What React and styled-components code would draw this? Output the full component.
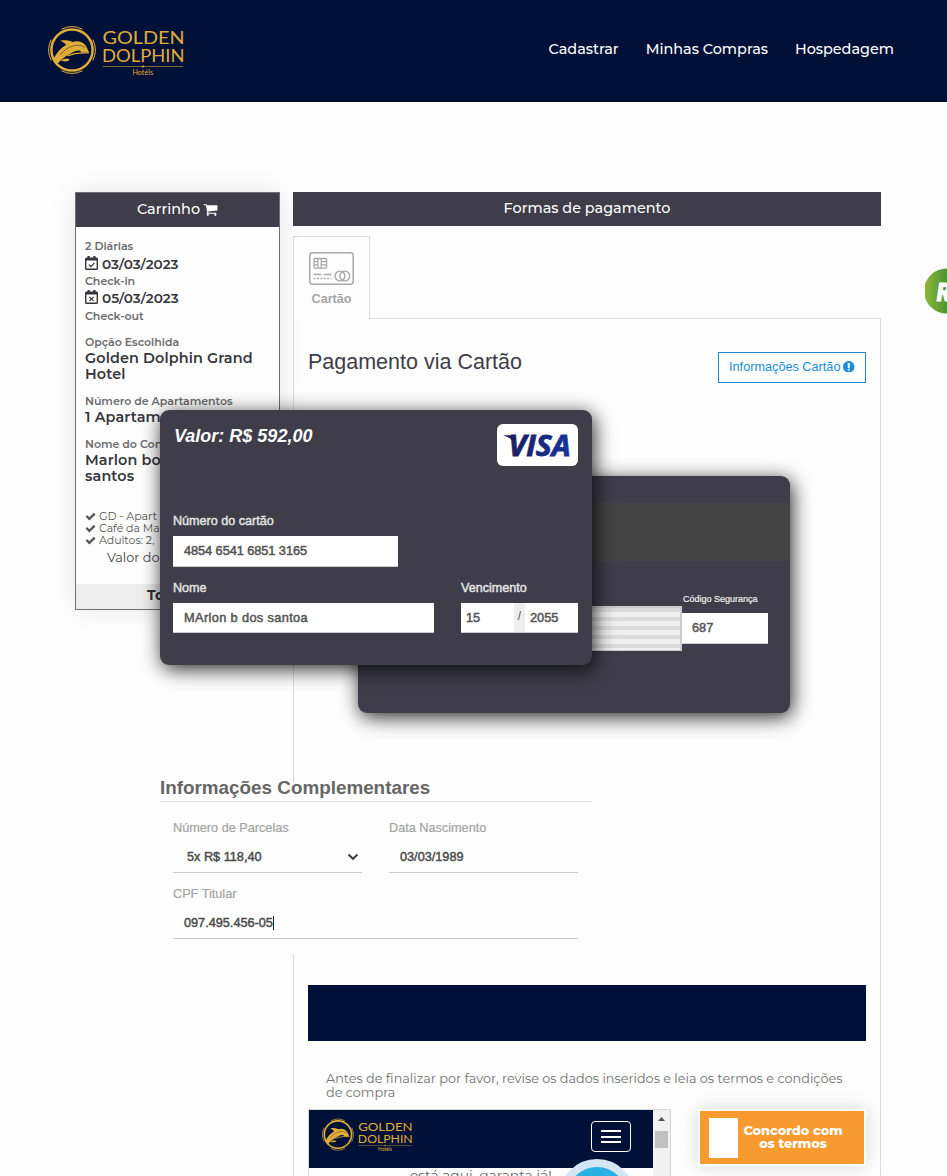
import React from "react";
import styled, { createGlobalStyle } from "styled-components";

const brand = '"Montserrat", "Inter", sans-serif';
const plain = '"Liberation Sans", Arial, sans-serif';
const navy = "#001037";
const slate = "#3e3d49";

const GlobalStyle = createGlobalStyle`
  * { box-sizing: border-box; }
  html, body { margin: 0; background: #fefefe; }
  body { overflow: hidden; }
`;

const Page = styled.div`
  height: 1176px;
  overflow: hidden;
  font-family: ${brand};
  color: #333;
`;

const Header = styled.header`
  height: 102px;
  background: ${navy};
  border-bottom: 1px solid #000a26;
  display: flex;
  justify-content: space-between;
  align-items: flex-start;
  padding: 25px 53px 0 48px;
`;

const Nav = styled.nav`
  display: flex;
  gap: 27px;
  padding-top: 14px;
`;

const NavLink = styled.a`
  color: #fff;
  font-size: 14.4px;
  font-weight: 500;
  line-height: 20px;
  white-space: nowrap;
`;

const Content = styled.main`
  display: flex;
  align-items: flex-start;
  gap: 13px;
  padding: 90px 66px 0 75px;
`;

const Cart = styled.aside`
  width: 205px;
  height: 418px;
  flex: none;
  display: flex;
  flex-direction: column;
  border: 1px solid #6f6f74;
  background: #fefefe;
  box-shadow: 0 0 24px rgba(0, 0, 0, 0.1);
`;

const CartHead = styled.div`
  height: 34px;
  background: ${slate};
  color: #fff;
  font-size: 14.4px;
  font-weight: 500;
  display: flex;
  align-items: center;
  justify-content: center;
  gap: 3px;
  padding-bottom: 2px;
`;

const CartBody = styled.div`
  flex: 1;
  padding: 11px 9px 0;
  display: flex;
  flex-direction: column;
`;

const CartGroup = styled.div`
  margin-bottom: ${(p) => p.$after || 11}px;
`;

const Caption = styled.div`
  font-size: 11px;
  font-weight: 600;
  color: #6c6c6f;
  line-height: ${(p) => p.$line || 16}px;
  letter-spacing: -0.03px;
  white-space: nowrap;
`;

const Strong = styled.div`
  font-size: 14.4px;
  font-weight: 600;
  color: #35353b;
  line-height: 16px;
  letter-spacing: 0.12px;
  white-space: nowrap;
`;

const DateLine = styled(Strong)`
  font-size: 13.6px;
  line-height: 20px;
  letter-spacing: 0;
  display: flex;
  align-items: center;
  gap: 4px;

  svg {
    margin-bottom: 3px;
  }
`;

const Perk = styled.div`
  display: flex;
  align-items: center;
  gap: 3px;
  font-size: 11px;
  line-height: 12px;
  color: #555;
  white-space: nowrap;
  letter-spacing: -0.05px;
`;

const CartValue = styled.div`
  font-size: 12.8px;
  line-height: 16px;
  margin-top: 4px;
  padding-left: 22px;
  color: #444;
`;

const CartTotal = styled.div`
  height: 25px;
  background: #ededed;
  padding-left: 71px;
  font-size: 14px;
  font-weight: 700;
  line-height: 23px;
`;

const Payment = styled.section`
  width: 588px;
  flex: none;
`;

const PaymentTitle = styled.div`
  height: 34px;
  background: ${slate};
  color: #fff;
  font-size: 14.4px;
  font-weight: 500;
  line-height: 32px;
  text-align: center;
`;

const Tab = styled.div`
  width: 77px;
  height: 83px;
  margin-top: 10px;
  margin-bottom: -1px;
  position: relative;
  z-index: 1;
  border: 1px solid #dcdcdc;
  border-bottom: 0;
  background: #fefefe;
  display: flex;
  flex-direction: column;
  align-items: center;
  padding-top: 15px;
  gap: 5px;
`;

const TabLabel = styled.span`
  font: bold 12.6px/18px ${plain};
  color: #a5a5a5;
`;

const Pane = styled.div`
  position: relative;
  z-index: 0;
  height: 870px;
  border: 1px solid #dcdcdc;
  padding: 29px 14px 0;
`;

const PaneHead = styled.div`
  display: flex;
  justify-content: space-between;
  align-items: flex-start;
`;

const PaneTitle = styled.h2`
  margin: 0;
  font: 400 21.5px/28px ${plain};
  color: #3e3d49;
`;

const InfoButton = styled.button`
  width: 148px;
  height: 31px;
  margin-top: 4px;
  padding: 0 0 2px;
  border: 1px solid #1b8ddb;
  background: #fff;
  color: #1b8ddb;
  font: 400 12.7px/16px ${plain};
  display: flex;
  align-items: center;
  justify-content: center;
  gap: 3px;
`;

const Overlay = styled.div`
  position: absolute;
  left: -134px;
  top: 91px;
  width: 630px;
  font-family: ${plain};
`;

const CardStage = styled.div`
  position: relative;
  height: 372px;
`;

const CardFront = styled.div`
  position: relative;
  width: 432px;
  height: 255px;
  border-radius: 9px;
  background: ${slate};
  box-shadow: 2px 4px 20px rgba(0, 0, 0, 0.85);
  padding: 14px 14px 0 13px;
`;

const CardBack = styled.div`
  position: absolute;
  left: 198px;
  top: 66px;
  width: 432px;
  height: 237px;
  border-radius: 9px;
  background: ${slate};
  box-shadow: 2px 4px 20px rgba(0, 0, 0, 0.85);
  padding-top: 27px;
`;

const Stripe = styled.div`
  height: 58px;
  background: #444;
`;

const SignatureRow = styled.div`
  display: flex;
  align-items: flex-end;
  padding-top: 31px;
  padding-left: 20px;
`;

const Signature = styled.div`
  width: 304px;
  height: 45px;
  margin-bottom: -7px;
  border: 2px solid #ccc;
  border-bottom-width: 1px;
  background: repeating-linear-gradient(#dcdcdc 0 4px, #f0f0f0 4px 9px);
`;

const CardTop = styled.div`
  display: flex;
  justify-content: space-between;
  align-items: flex-start;
`;

const Amount = styled.div`
  font: italic bold 18px/24px ${plain};
  color: #fff;
  padding-left: 1px;
`;

const FlagBox = styled.div`
  width: 81px;
  height: 42px;
  border-radius: 6px;
  background: #fff;
`;

const CardFields = styled.div`
  margin-top: 46px;
`;

const FieldRow = styled.div`
  display: flex;
  justify-content: space-between;
  margin-top: ${(p) => p.$top || 0}px;
`;

const Field = styled.label`
  display: flex;
  flex-direction: column;
  width: ${(p) => p.$w}px;
`;

const FieldLabel = styled.span`
  font: 400 12.6px/18px ${plain};
  -webkit-text-stroke: 0.45px;
  color: #e3e3e3;
  margin-bottom: 6px;
  white-space: nowrap;
`;

const SmallLabel = styled.span`
  font: 400 9px/14px ${plain};
  -webkit-text-stroke: 0.2px;
  color: #eee;
  margin-bottom: 7px;
  padding-left: 1px;
  white-space: nowrap;
`;

const Input = styled.div`
  height: ${(p) => p.$h || 31}px;
  width: ${(p) => (p.$w ? p.$w + "px" : "auto")};
  background: #fff;
  border-bottom: 1px solid #ccc;
  color: #555;
  font: 400 12.8px/29px ${plain};
  -webkit-text-stroke: 0.5px;
  padding-left: ${(p) => p.$pad ?? 11}px;
  letter-spacing: ${(p) => p.$track || 0}px;
  white-space: nowrap;
`;

const DateGroup = styled.div`
  display: flex;
`;

const Slash = styled.div`
  width: 11px;
  height: 30px;
  background: #eee;
  border-bottom: 1px solid #ccc;
  color: #555;
  font: 400 12px/27px ${plain};
  text-align: center;
`;

const Extra = styled.section`
  width: 432px;
  height: 172px;
  background: #fefefe;
`;

const ExtraTitle = styled.h3`
  margin: 0;
  position: relative;
  top: -8px;
  height: 28px;
  border-bottom: 1px solid #e5e5e5;
  font: bold 18.85px/27px ${plain};
  color: #666;
`;

const ExtraGrid = styled.div`
  display: grid;
  grid-template-columns: 189px 189px;
  column-gap: 27px;
  padding: 9px 14px 0 13px;
`;

const ExtraField = styled.label`
  height: 66px;
  display: flex;
  flex-direction: column;
  grid-column: ${(p) => (p.$wide ? "1 / -1" : "auto")};
`;

const ExtraLabel = styled.span`
  font: 400 12.7px/18px ${plain};
  -webkit-text-stroke: 0.2px;
  color: #a3a3a3;
`;

const ExtraValue = styled.div`
  height: 36px;
  border-bottom: 1px solid #c9c9c9;
  padding: 5px 3px 0 ${(p) => p.$pad || 11}px;
  display: flex;
  align-items: center;
  font: 400 12.7px/16px ${plain};
  -webkit-text-stroke: 0.45px;
  color: #4a4a4a;
`;

const Chevron = styled.svg`
  margin-left: auto;
`;

const Caret = styled.span`
  width: 1px;
  height: 14px;
  background: #222;
`;

const NavyBar = styled.div`
  height: 56px;
  margin-top: 602px;
  background: ${navy};
`;

const TermsText = styled.p`
  margin: 31px 0 9px;
  padding-left: 18px;
  font-size: 12.8px;
  line-height: 14px;
  color: #707070;
  white-space: nowrap;
`;

const TermsRow = styled.div`
  display: flex;
  justify-content: space-between;
  align-items: flex-start;
`;

const Frame = styled.div`
  width: 363px;
  height: 200px;
  border: 1px solid #d6d6d6;
  display: flex;
`;

const FramePage = styled.div`
  flex: 1;
  overflow: hidden;
`;

const FrameHead = styled.div`
  height: 58px;
  background: ${navy};
  display: flex;
  justify-content: space-between;
  padding: 8px 22px 0 13px;
`;

const MenuButton = styled.div`
  width: 40px;
  height: 31px;
  margin-top: 3px;
  border: 1px solid #fff;
  border-radius: 4px;
  display: flex;
  flex-direction: column;
  align-items: center;
  padding-top: 8px;
  gap: ${(p) => p.$gap || 3}px;
`;

const MenuBar = styled.i`
  width: 20px;
  height: ${(p) => p.$h || 2}px;
  background: #fff;
`;

const FrameBody = styled.div`
  display: flex;
  align-items: flex-start;
  padding-left: 101px;
  gap: 7px;
`;

const FrameText = styled.div`
  font-size: 13.8px;
  line-height: 18px;
  margin-top: -2px;
  color: #666;
  white-space: nowrap;
`;

const Bubble = styled.div`
  width: 76px;
  height: 76px;
  flex: none;
  margin-top: -9px;
  border-radius: 50%;
  background: #2bb0e6;
  border: 8px solid #d3e6f2;
`;

const Scrollbar = styled.div`
  width: 17px;
  background: #f1f1f1;
  display: flex;
  flex-direction: column;
  align-items: center;
`;

const ScrollThumb = styled.div`
  width: 13px;
  height: 17px;
  margin-top: 4px;
  background: #c1c1c1;
`;

const Agree = styled.div`
  width: 168px;
  height: 57px;
  border: 2px solid #fff;
  background: #f89a2f;
  box-shadow: 0 0 18px rgba(0, 0, 0, 0.16);
  display: flex;
  align-items: center;
  padding-left: 9px;
  gap: 4px;
`;

const AgreeBox = styled.div`
  width: 29px;
  height: 40px;
  background: #fff;
`;

const AgreeText = styled.div`
  font-size: 12.8px;
  font-weight: 800;
  line-height: 13px;
  color: #fff;
  text-align: center;
  width: 102px;
  padding-bottom: 2px;
  letter-spacing: 0;
  white-space: nowrap;
`;

const Floating = styled.svg`
  position: absolute;
  left: 925px;
  top: 268px;
`;

function Logo({ width }) {
  return (
    <svg width={width} height={(width * 52) / 137} viewBox="0 0 137 52">
      <g fill="none" stroke="#e0ac38">
        <circle cx="24" cy="25" r="20.6" strokeWidth="2.5" />
        <path
          strokeWidth="1"
          d="M13.5 4.2a23.4 23.4 0 0 1 21 0M13.5 45.8a23.4 23.4 0 0 0 21 0M3.2 14.5a23.4 23.4 0 0 0 0 21M44.8 14.5a23.4 23.4 0 0 1 0 21"
        />
      </g>
      <path
        fill="#e0ac38"
        d="M12.5 15.6C17 14.8 21.3 15.2 24.6 17C29 15.2 35 16.6 37.8 20.6C39.2 22.8 39.6 25.4 41.4 27.8C38 27.3 36 27.2 33.6 27.4C32 24.8 28.2 25.2 24.6 27.6C18 31 12 35 8.6 40.4L5 35.2C8 28.8 12 23.4 18.2 20.1C17 18.3 15 17.2 12.5 15.6Z"
      />
      <path fill="none" stroke={navy} strokeWidth=".45" d="M12 30C17 24.6 21 21.6 27 20.4C31 19.8 34.5 20.8 37.4 22.6" />
      <path fill="none" stroke="#e0ac38" strokeWidth="1.2" d="M20 30.8C25 28.6 33 27.4 41 28" />
      <path fill="#e0ac38" d="M12.5 35.6C15.5 33.7 18 33.4 21.6 34.2C21.2 36.6 17 37 12.5 35.6Z" />
      <g fill="#e0ac38" fontFamily="Lato, sans-serif">
        <text x="54.5" y="19" fontSize="18" textLength="82" lengthAdjust="spacingAndGlyphs">GOLDEN</text>
        <text x="54" y="37" fontSize="18" textLength="82.5" lengthAdjust="spacingAndGlyphs">DOLPHIN</text>
        <text x="84.5" y="49.6" fontSize="7.2" textLength="20.5" lengthAdjust="spacingAndGlyphs">Hotéls</text>
      </g>
      <path d="M55 41.5H135" stroke="#b98f35" strokeWidth=".7" />
      <circle cx="95" cy="41.5" r="1.1" fill="#e0ac38" />
    </svg>
  );
}

function CartIcon() {
  return (
    <svg width="15" height="15" viewBox="0 0 1792 1792" fill="#fff">
      <path d="M704 1536q0 52-38 90t-90 38-90-38-38-90 38-90 90-38 90 38 38 90zm896 0q0 52-38 90t-90 38-90-38-38-90 38-90 90-38 90 38 38 90zm128-1088v512q0 24-16.5 42.5t-40.5 21.5l-1044 122q13 60 13 70 0 16-24 64h920q26 0 45 19t19 45-19 45-45 19h-1024q-26 0-45-19t-19-45q0-11 8-31.5t16-36 21.5-40 15.5-29.5l-177-823h-204q-26 0-45-19t-19-45 19-45 45-19h256q16 0 28.5 6.5t19.5 15.5 13 24.5 8 26 5.5 29.5 4.5 26h1201q26 0 45 19t19 45z" />
    </svg>
  );
}

function CheckIcon() {
  return (
    <svg width="11" height="11" viewBox="0 0 1792 1792" fill="#555">
      <path d="M1671 566q0 40-28 68l-724 724-136 136q-28 28-68 28t-68-28l-136-136-362-362q-28-28-28-68t28-68l136-136q28-28 68-28t68 28l294 295 656-657q28-28 68-28t68 28l136 136q28 28 28 68z" />
    </svg>
  );
}

function AlertIcon() {
  return (
    <svg width="11.5" height="11.5" viewBox="128 128 1536 1536" fill="#1b8ddb">
      <path d="M896 128q209 0 385.5 103t279.5 279.5 103 385.5-103 385.5-279.5 279.5-385.5 103-385.5-103-279.5-279.5-103-385.5 103-385.5 279.5-279.5 385.5-103zm128 1247v-190q0-14-9-23.5t-22-9.5h-192q-13 0-23 10t-10 23v190q0 13 10 23t23 10h192q13 0 22-9.5t9-23.5zm-2-344l18-621q0-12-10-18-10-8-24-8h-220q-14 0-24 8-10 6-10 18l17 621q0 10 10 17.5t24 7.5h185q14 0 23.5-7.5t10.5-17.5z" />
    </svg>
  );
}

function CalendarIcon({ mark }) {
  return (
    <svg width="13" height="14" viewBox="0 0 13 14" fill="none" stroke="#35353b">
      <rect x=".7" y="2.2" width="11.6" height="11.1" rx=".8" strokeWidth="1.4" />
      <path d="M.7 3.4H12.3" strokeWidth="2.2" />
      <path d="M3.6 0V3M9.4 0V3" strokeWidth="2.2" />
      <path d={mark} strokeWidth="1.3" />
    </svg>
  );
}

function CardIcon() {
  return (
    <svg width="45" height="33" viewBox="0 0 45 33" fill="none" stroke="#a8a8a8">
      <rect x=".8" y=".8" width="43.4" height="31.4" rx="2.6" strokeWidth="1.5" />
      <rect x="5" y="6.5" width="12.6" height="9.6" rx="1" strokeWidth="1.3" />
      <path d="M8.8 6.5V16.1M5 9.6H8.8M5 12.8H8.8M12.2 16.1V10.6Q12.2 9.6 13.2 9.6H17.6M12.2 12.8H17.6M8.8 6.5H12.2V9.6" strokeWidth="1.2" />
      <path d="M4.5 22.5H12.5M14.5 22.5H22.5" strokeWidth="1.4" />
      <path d="M4.5 26.5H22.5" strokeWidth="1.3" strokeDasharray="2 1.4" />
      <circle cx="31" cy="24" r="4.9" strokeWidth="1.4" />
      <circle cx="35.8" cy="24" r="4.9" strokeWidth="1.4" />
    </svg>
  );
}

function VisaLogo() {
  return (
    <svg width="81" height="42" viewBox="0 0 81 42">
      <defs>
        <linearGradient id="visa" x1="0" x2="1">
          <stop offset="0" stopColor="#1c1f5c" />
          <stop offset="1" stopColor="#15349c" />
        </linearGradient>
      </defs>
      <text
        x="11.5"
        y="32"
        fill="url(#visa)"
        fontFamily='"Open Sans", sans-serif'
        fontStyle="italic"
        fontWeight="700"
        fontSize="28.5"
        stroke="url(#visa)"
        strokeWidth=".9"
        textLength="62"
        lengthAdjust="spacingAndGlyphs"
      >
        VISA
      </text>
      <path fill="#1c1f5c" d="M6.5 11.2H14.5Q16.5 11.2 17 13L18.5 21Q15.5 14 6.5 11.6Z" />
    </svg>
  );
}

export default function App() {
  return (
    <Page>
      <GlobalStyle />
      <Header>
        <Logo width={137} />
        <Nav>
          <NavLink>Cadastrar</NavLink>
          <NavLink>Minhas Compras</NavLink>
          <NavLink>Hospedagem</NavLink>
        </Nav>
      </Header>

      <Content>
        <Cart>
          <CartHead>
            Carrinho <CartIcon />
          </CartHead>
          <CartBody>
            <CartGroup $after={10}>
              <Caption>2 Diárias</Caption>
              <DateLine>
                <CalendarIcon mark="M3.8 8.6L5.8 10.6L9.4 6.9" />
                03/03/2023
              </DateLine>
              <Caption $line={14}>Check-in</Caption>
              <DateLine>
                <CalendarIcon mark="M4.4 6.9L8.6 10.9M8.6 6.9L4.4 10.9" />
                05/03/2023
              </DateLine>
              <Caption>Check-out</Caption>
            </CartGroup>
            <CartGroup>
              <Caption>Opção Escolhida</Caption>
              <Strong>Golden Dolphin Grand</Strong>
              <Strong>Hotel</Strong>
            </CartGroup>
            <CartGroup>
              <Caption>Número de Apartamentos</Caption>
              <Strong>1 Apartamento</Strong>
            </CartGroup>
            <CartGroup $after={26}>
              <Caption>Nome do Contratante</Caption>
              <Strong>Marlon bo dos</Strong>
              <Strong>santos</Strong>
            </CartGroup>
            <Perk><CheckIcon />GD - Apart</Perk>
            <Perk><CheckIcon />Café da Manhã</Perk>
            <Perk><CheckIcon />Adultos: 2,</Perk>
            <CartValue>Valor do</CartValue>
          </CartBody>
          <CartTotal>Total</CartTotal>
        </Cart>

        <Payment>
          <PaymentTitle>Formas de pagamento</PaymentTitle>
          <Tab>
            <CardIcon />
            <TabLabel>Cartão</TabLabel>
          </Tab>
          <Pane>
            <PaneHead>
              <PaneTitle>Pagamento via Cartão</PaneTitle>
              <InfoButton>
                Informações Cartão <AlertIcon />
              </InfoButton>
            </PaneHead>

            <NavyBar />
            <TermsText>
              Antes de finalizar por favor, revise os dados inseridos e leia os termos e condições
              <br />
              de compra
            </TermsText>
            <TermsRow>
              <Frame>
                <FramePage>
                  <FrameHead>
                    <Logo width={91} />
                    <MenuButton $gap={3.5}>
                      <MenuBar />
                      <MenuBar />
                      <MenuBar $h={1.5} />
                    </MenuButton>
                  </FrameHead>
                  <FrameBody>
                    <FrameText>está aqui, garanta já!</FrameText>
                    <Bubble />
                  </FrameBody>
                </FramePage>
                <Scrollbar>
                  <svg width="17" height="17" viewBox="0 0 17 17">
                    <path d="M5 11L8.5 7L12 11Z" fill="#505050" />
                  </svg>
                  <ScrollThumb />
                </Scrollbar>
              </Frame>
              <Agree>
                <AgreeBox />
                <AgreeText>
                  Concordo com
                  <br />
                  os termos
                </AgreeText>
              </Agree>
            </TermsRow>

            <Overlay>
              <CardStage>
                <CardBack>
                  <Stripe />
                  <SignatureRow>
                    <Signature />
                    <Field $w={86}>
                      <SmallLabel>Código Segurança</SmallLabel>
                      <Input $pad={10}>687</Input>
                    </Field>
                  </SignatureRow>
                </CardBack>
                <CardFront>
                  <CardTop>
                    <Amount>Valor: R$ 592,00</Amount>
                    <FlagBox>
                      <VisaLogo />
                    </FlagBox>
                  </CardTop>
                  <CardFields>
                    <Field $w={225}>
                      <FieldLabel>Número do cartão</FieldLabel>
                      <Input $track={-0.08}>4854 6541 6851 3165</Input>
                    </Field>
                    <FieldRow $top={12}>
                      <Field $w={261}>
                        <FieldLabel>Nome</FieldLabel>
                        <Input $h={30} $track={0.35}>MArlon b dos santoa</Input>
                      </Field>
                      <Field $w={117}>
                        <FieldLabel>Vencimento</FieldLabel>
                        <DateGroup>
                          <Input $h={30} $w={53} $pad={5}>15</Input>
                          <Slash>/</Slash>
                          <Input $h={30} $w={53} $pad={5}>2055</Input>
                        </DateGroup>
                      </Field>
                    </FieldRow>
                  </CardFields>
                </CardFront>
              </CardStage>
              <Extra>
                <ExtraTitle>Informações Complementares</ExtraTitle>
                <ExtraGrid>
                  <ExtraField>
                    <ExtraLabel>Número de Parcelas</ExtraLabel>
                    <ExtraValue $pad={14}>
                      5x R$ 118,40
                      <Chevron width="12" height="8" viewBox="0 0 12 8" fill="none" stroke="#3c3c3c" strokeWidth="2">
                        <path d="M1.5 1.5L6 5.8L10.5 1.5" />
                      </Chevron>
                    </ExtraValue>
                  </ExtraField>
                  <ExtraField>
                    <ExtraLabel>Data Nascimento</ExtraLabel>
                    <ExtraValue>03/03/1989</ExtraValue>
                  </ExtraField>
                  <ExtraField $wide>
                    <ExtraLabel>CPF Titular</ExtraLabel>
                    <ExtraValue>
                      097.495.456-05
                      <Caret />
                    </ExtraValue>
                  </ExtraField>
                </ExtraGrid>
              </Extra>
            </Overlay>
          </Pane>
        </Payment>
      </Content>

      <Floating width="22" height="46" viewBox="0 0 22 46">
        <defs>
          <linearGradient id="leaf" x1="0" x2="1">
            <stop offset="0" stopColor="#8db835" />
            <stop offset="1" stopColor="#4d9336" />
          </linearGradient>
        </defs>
        <path d="M22 .4A23 22.6 0 0 0 22 45.6Z" fill="url(#leaf)" />
        <text
          x="12"
          y="32.5"
          fill="#fff"
          stroke="#fff"
          strokeWidth="1.2"
          fontFamily="Roboto, sans-serif"
          fontStyle="italic"
          fontWeight="900"
          fontSize="25"
          textLength="13.5"
          lengthAdjust="spacingAndGlyphs"
        >
          R
        </text>
      </Floating>
    </Page>
  );
}
